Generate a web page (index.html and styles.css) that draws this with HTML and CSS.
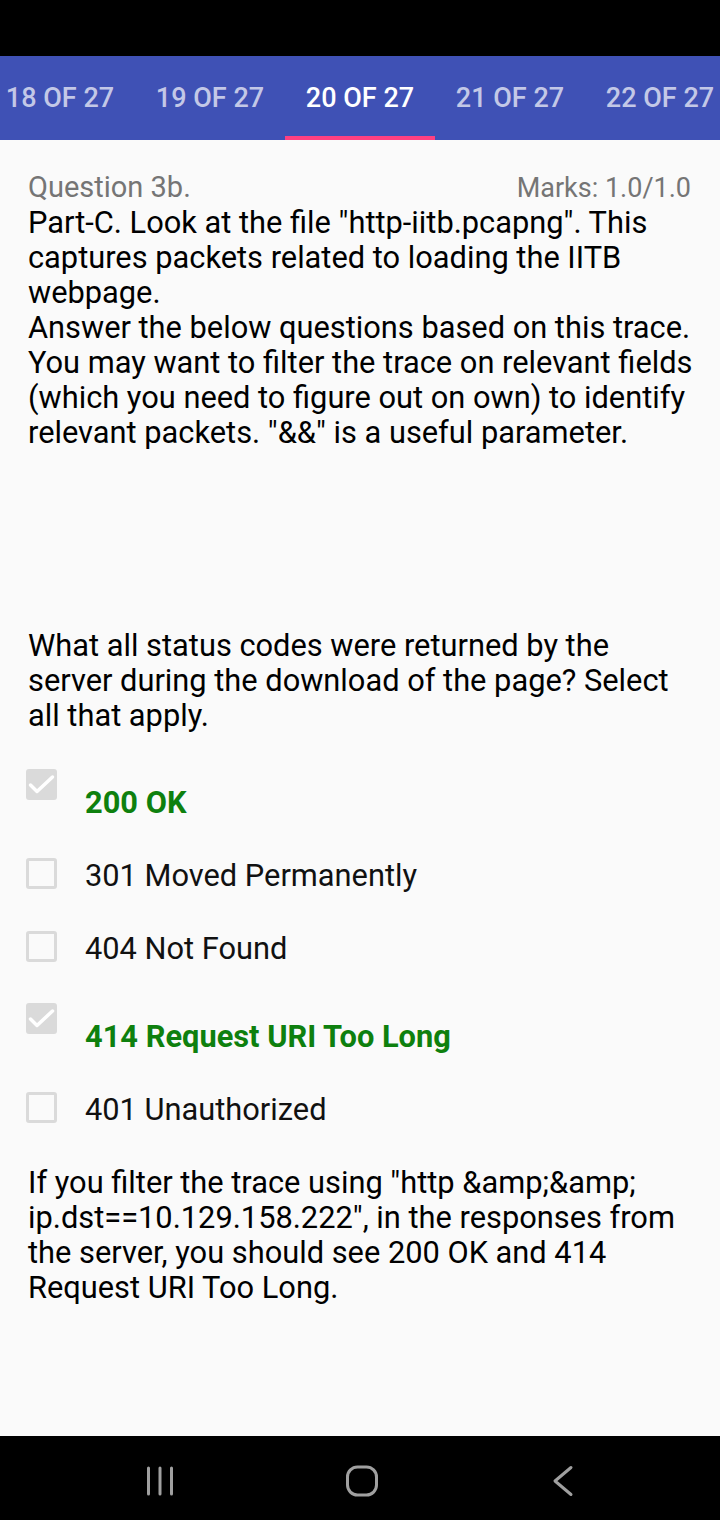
FILE: index.html
```html
<!DOCTYPE html>
<html>
<head>
<meta charset="utf-8">
<link rel="stylesheet" href="styles.css">
</head>
<body>
<div class="status-bar"></div>
<nav class="tabs">
  <div class="tab-strip">
    <div class="tab">18 OF 27</div>
    <div class="tab">19 OF 27</div>
    <div class="tab active">20 OF 27</div>
    <div class="tab">21 OF 27</div>
    <div class="tab">22 OF 27</div>
  </div>
</nav>
<main class="content">
  <div class="q-head">
    <span class="q-num">Question 3b.</span>
    <span class="q-marks">Marks: 1.0/1.0</span>
  </div>
  <p class="text intro">Part-C. Look at the file "http-iitb.pcapng". This captures packets related to loading the IITB webpage.<br>Answer the below questions based on this trace. You may want to filter the trace on relevant fields (which you need to figure out on own) to identify relevant packets. "&amp;&amp;" is a useful parameter.</p>
  <p class="text prompt">What all status codes were returned by the server during the download of the page? Select all that apply.</p>
  <ul class="options">
    <li class="opt checked"><span class="box"><svg viewBox="0 0 31 31" width="31" height="31"><path d="M4.5 16 L11 22.5 L26.5 8" fill="none" stroke="#fff" stroke-width="3.5" stroke-linecap="round" stroke-linejoin="round"/></svg></span><span class="label">200 OK</span></li>
    <li class="opt"><span class="box"></span><span class="label">301 Moved Permanently</span></li>
    <li class="opt"><span class="box"></span><span class="label">404 Not Found</span></li>
    <li class="opt checked"><span class="box"><svg viewBox="0 0 31 31" width="31" height="31"><path d="M4.5 16 L11 22.5 L26.5 8" fill="none" stroke="#fff" stroke-width="3.5" stroke-linecap="round" stroke-linejoin="round"/></svg></span><span class="label">414 Request URI Too Long</span></li>
    <li class="opt"><span class="box"></span><span class="label">401 Unauthorized</span></li>
  </ul>
  <p class="text feedback">If you filter the trace using "http &amp;amp;&amp;amp; ip.dst==10.129.158.222", in the responses from the server, you should see 200 OK and 414 Request URI Too Long.</p>
</main>
<footer class="nav-bar">
  <svg class="nav-icon" width="40" height="40" viewBox="0 0 40 40"><g stroke="#a0a0a0" stroke-width="3" stroke-linecap="round"><line x1="8.5" y1="7" x2="8.5" y2="33"/><line x1="20" y1="7" x2="20" y2="33"/><line x1="31.5" y1="7" x2="31.5" y2="33"/></g></svg>
  <svg class="nav-icon" width="40" height="40" viewBox="0 0 40 40"><rect x="5.5" y="6" width="29" height="28" rx="10" fill="none" stroke="#a0a0a0" stroke-width="3"/></svg>
  <svg class="nav-icon" width="40" height="40" viewBox="0 0 40 40"><path d="M28 6.5 L12 20 L28 33.5" fill="none" stroke="#a0a0a0" stroke-width="3" stroke-linecap="round" stroke-linejoin="round"/></svg>
</footer>
</body>
</html>
```
FILE: styles.css
```css
html, body {
  margin: 0;
  padding: 0;
}
body {
  width: 720px;
  height: 1520px;
  background: #fafafa;
  font-family: Roboto, "Noto Sans", sans-serif;
  display: flex;
  flex-direction: column;
  overflow: hidden;
}
.status-bar {
  height: 56px;
  background: #000;
  flex: none;
}
.tabs {
  height: 84px;
  background: #3f51b5;
  overflow: hidden;
  flex: none;
}
.tab-strip {
  display: flex;
  margin-left: -15px;
  height: 100%;
}
.tab {
  flex: none;
  width: 150px;
  height: 100%;
  box-sizing: border-box;
  display: flex;
  align-items: center;
  justify-content: center;
  font-size: 27px;
  font-weight: 500;
  color: rgba(255, 255, 255, 0.7);
  padding-top: 4px;
  border-bottom: 4px solid transparent;
}
.tab.active {
  color: #fff;
  border-bottom-color: #ff4081;
}
.content {
  flex: 1;
  padding: 30px 22px 0 28px;
}
.q-head {
  display: flex;
  justify-content: space-between;
  align-items: baseline;
  color: #757575;
  font-size: 29px;
  line-height: 34px;
}
.q-marks {
  font-size: 27px;
  margin-right: 7px;
}
.text {
  margin: 0;
  font-size: 30.8px;
  line-height: 35px;
  color: #000;
}
.prompt {
  margin-top: 178px;
}
.options {
  list-style: none;
  margin: 18px 0 0 0;
  padding: 0;
}
.opt {
  display: flex;
  align-items: center;
  height: 73px;
}
.opt.checked {
  height: 88px;
  align-items: flex-start;
}
.box {
  flex: none;
  width: 31px;
  height: 31px;
  box-sizing: border-box;
  border: 3px solid #dadada;
  border-radius: 3px;
  margin-left: -2px;
  margin-right: 28px;
  margin-top: -4px;
  display: flex;
  align-items: center;
  justify-content: center;
}
.opt.checked .box {
  background: #dadada;
  border: none;
  margin-top: 18px;
}
.label {
  font-size: 30.8px;
  line-height: 35px;
  color: #111;
}
.opt.checked .label {
  color: #0e800e;
  font-weight: 700;
  margin-top: 34px;
}
.feedback {
  margin-top: 19px;
}
.nav-bar {
  flex: none;
  height: 84px;
  box-sizing: border-box;
  background: #000;
  display: flex;
  align-items: center;
  justify-content: space-between;
  padding: 6px 137px 0 140px;
}
```
